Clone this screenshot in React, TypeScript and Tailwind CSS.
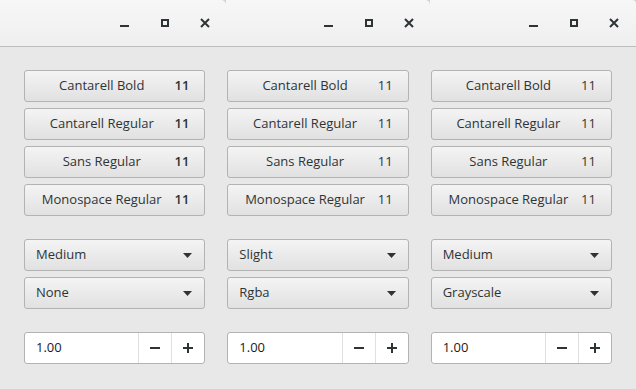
import React from "react";

const FONT = "font-['Open_Sans','Noto_Sans',sans-serif]";

const rows = [
  { label: "Cantarell Bold", bold: true },
  { label: "Cantarell Regular", bold: false },
  { label: "Sans Regular", bold: false },
  { label: "Monospace Regular", bold: false },
];

const columns = [
  { hint: "Medium", aa: "None", strong: true },
  { hint: "Slight", aa: "Rgba", strong: false },
  { hint: "Medium", aa: "Grayscale", strong: false },
];

function WindowControls() {
  return (
    <div className="flex items-center gap-[30px] text-[#2e3436]">
      <svg width="10" height="10" viewBox="0 0 10 10">
        <rect x="0" y="7" width="9" height="2" fill="currentColor" />
      </svg>
      <svg width="10" height="10" viewBox="0 0 10 10">
        <rect x="2" y="2" width="6" height="6" fill="none" stroke="currentColor" strokeWidth="2" />
      </svg>
      <svg width="10" height="10" viewBox="0 0 10 10">
        <path d="M1 1 L9 9 M9 1 L1 9" stroke="currentColor" strokeWidth="2" />
      </svg>
    </div>
  );
}

function FontButton({ label, strong, bold }: { label: string; strong: boolean; bold: boolean }) {
  return (
    <div className="flex h-[32px] items-center rounded-[3px] border border-[#b3b3b1] bg-gradient-to-b from-[#f4f4f4] to-[#e1e1e1] pl-[10px] pr-[15px] text-[13px] text-[#2e3436]">
      <span className={`flex-1 text-center ${strong && bold ? "font-medium" : ""}`}>{label}</span>
      <span className={`ml-[6px] ${strong ? "font-semibold" : ""}`}>11</span>
    </div>
  );
}

function Combo({ text }: { text: string }) {
  return (
    <div className="flex h-[32px] items-center justify-between rounded-[3px] border border-[#b3b3b1] bg-gradient-to-b from-[#f4f4f4] to-[#e1e1e1] pl-[11px] pr-[12px] text-[13px] text-[#2e3436]">
      <span>{text}</span>
      <svg width="9" height="5" viewBox="0 0 9 5">
        <path d="M0 0 H9 L4.5 5 Z" fill="#2e3436" />
      </svg>
    </div>
  );
}

function Spin() {
  return (
    <div className="flex h-[32px] items-stretch rounded-[3px] border border-[#b3b3b1] bg-white text-[13px] text-[#1a1a1a]">
      <div className="flex flex-1 items-center pl-[11px]">1.00</div>
      <div className="flex w-[33px] items-center justify-center border-l border-[#e0e0e0]">
        <svg width="10" height="10" viewBox="0 0 10 10">
          <rect x="0" y="4" width="10" height="2" fill="#2e3436" />
        </svg>
      </div>
      <div className="flex w-[33px] items-center justify-center border-l border-[#e0e0e0]">
        <svg width="10" height="10" viewBox="0 0 10 10">
          <rect x="0" y="4" width="10" height="2" fill="#2e3436" />
          <rect x="4" y="0" width="2" height="10" fill="#2e3436" />
        </svg>
      </div>
    </div>
  );
}

export default function App() {
  return (
    <div className={`h-[389px] w-[636px] overflow-hidden bg-[#e8e8e8] ${FONT}`}>
      {/* title bars of the three overlapping windows */}
      <div className="flex h-[47px] border-b border-[#bdbdbd] bg-[#d4d4d4]">
        <div className="flex w-[226px] items-center justify-end rounded-tr-[5px] bg-gradient-to-b from-[#f7f7f7] to-[#efefef] pr-[16px]">
          <WindowControls />
        </div>
        <div className="flex w-[204px] items-center justify-end rounded-tr-[5px] bg-gradient-to-b from-[#f7f7f7] to-[#efefef] pr-[16px]">
          <WindowControls />
        </div>
        <div className="flex flex-1 items-center justify-end rounded-tr-[4px] bg-gradient-to-b from-[#f7f7f7] to-[#efefef] pr-[17px]">
          <WindowControls />
        </div>
      </div>

      <div className="flex gap-[22px] px-[24px] pt-[23px]">
        {columns.map((col, i) => (
          <div key={i} className="flex w-[182px] flex-col">
            <div className="flex flex-col gap-[6px]">
              {rows.map((r) => (
                <FontButton key={r.label} label={r.label} strong={col.strong} bold={r.bold} />
              ))}
            </div>
            <div className="mt-[23px] flex flex-col gap-[6px]">
              <Combo text={col.hint} />
              <Combo text={col.aa} />
            </div>
            <div className="mt-[23px]">
              <Spin />
            </div>
          </div>
        ))}
      </div>
    </div>
  );
}
